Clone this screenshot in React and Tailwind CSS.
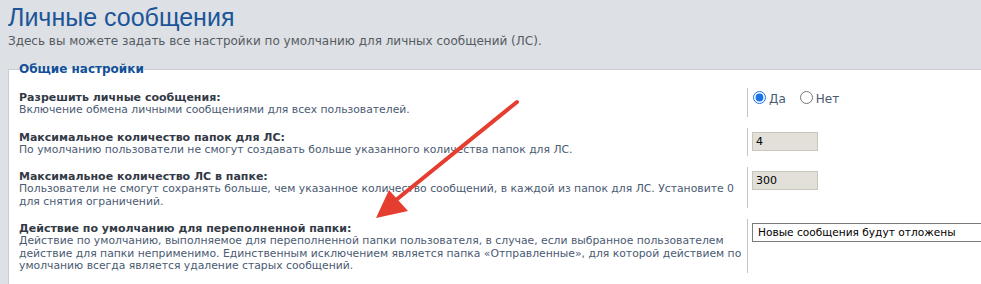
const rows = [
  {
    label: 'Разрешить личные сообщения:',
    desc: 'Включение обмена личными сообщениями для всех пользователей.',
    type: 'radio',
  },
  {
    label: 'Максимальное количество папок для ЛС:',
    desc: 'По умолчанию пользователи не смогут создавать больше указанного количества папок для ЛС.',
    type: 'text',
    value: '4',
  },
  {
    label: 'Максимальное количество ЛС в папке:',
    desc: 'Пользователи не смогут сохранять больше, чем указанное количество сообщений, в каждой из папок для ЛС. Установите 0\nдля снятия ограничений.',
    type: 'text',
    value: '300',
  },
  {
    label: 'Действие по умолчанию для переполненной папки:',
    desc: 'Действие по умолчанию, выполняемое для переполненной папки пользователя, в случае, если выбранное пользователем\nдействие для папки неприменимо. Единственным исключением является папка «Отправленные», для которой действием по\nумолчанию всегда является удаление старых сообщений.',
    type: 'select',
  },
];

function Field({ row }) {
  if (row.type === 'radio') {
    return (
      <div className="flex items-start pt-[3px] pl-[1px] text-[12px] leading-[14px] text-[#4a5a72]">
        <label className="flex items-start mr-[14px]">
          <input type="radio" name="allow_pm" defaultChecked className="m-0 w-[13px] h-[13px] mr-[3px] accent-[#1a73e8]" />
          <span className="mt-[1px]">Да</span>
        </label>
        <label className="flex items-start">
          <input type="radio" name="allow_pm" className="m-0 w-[13px] h-[13px] mr-[3px]" />
          <span className="mt-[1px]">Нет</span>
        </label>
      </div>
    );
  }
  if (row.type === 'text') {
    return (
      <input
        type="text"
        defaultValue={row.value}
        className="mt-[1px] w-[66px] h-[19px] px-[3px] bg-[#e3e0da] border border-[#c9c5bd] text-[11px] text-black outline-none"
      />
    );
  }
  return (
    <select className="w-[320px] h-[19px] pl-[5px] appearance-none bg-white border border-[#7a7a7a] text-[10.6px] text-black outline-none">
      <option>Новые сообщения будут отложены</option>
    </select>
  );
}

export default function App() {
  return (
    <div className="relative h-[284px] overflow-hidden bg-[#dde0e4] font-['DejaVu_Sans',Verdana,sans-serif]">
      <div className="pl-[8px] pt-[2px]">
        <h1 className="text-[25px] leading-[30px] text-[#1b5598] font-['Liberation_Sans',Arial,sans-serif]">Личные сообщения</h1>
        <p className="mt-[2px] text-[12px] leading-[14px] text-[#555b63]">
          Здесь вы можете задать все настройки по умолчанию для личных сообщений (ЛС).
        </p>
      </div>

      <fieldset className="ml-[8px] mt-[14px] pl-[10px] pb-[60px] bg-white border-t border-l border-[#c8ccd2]">
        <legend className="text-[12px] leading-[14px] font-bold text-[#115098]">Общие настройки</legend>
        <div className="flex flex-col gap-[11px] pt-[12px]">
          {rows.map((row) => (
            <div key={row.label} className="flex">
              <div className="flex-1 pt-[3px] whitespace-nowrap">
                <div className="text-[11px] leading-[13px] font-bold text-[#333a46]">{row.label}</div>
                <div className="text-[10.8px] leading-[12.5px] whitespace-pre-line text-[#4a5a72]">{row.desc}</div>
              </div>
              <div className="w-[234px] shrink-0 border-l border-[#c4c4c4] pl-[4px]">
                <Field row={row} />
              </div>
            </div>
          ))}
        </div>
      </fieldset>

      <svg className="absolute left-0 top-0 pointer-events-none" width="981" height="284">
        <line x1="517" y1="102" x2="396" y2="200" stroke="#e53d2f" strokeWidth="4" strokeLinecap="round" />
        <polygon points="376,218 389,190 408,211" fill="#e53d2f" />
      </svg>
    </div>
  );
}
